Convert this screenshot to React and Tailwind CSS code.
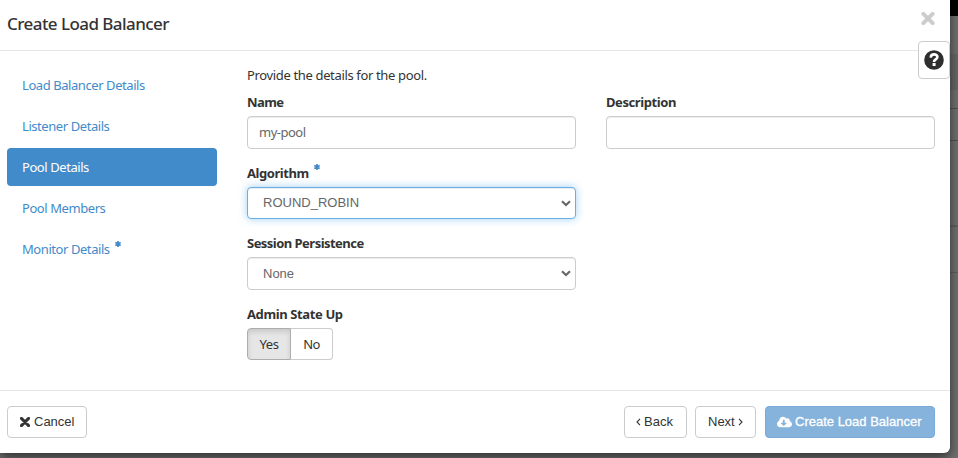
import { FaCloudDownloadAlt } from "react-icons/fa";

const sans = "font-['Noto_Sans',sans-serif]";
const arial = "font-['Liberation_Sans',Arial,sans-serif]";
const boxed = "rounded-[4px] border border-[#ccc] bg-white";

function Star({ className }) {
  return (
    <svg className={className} width="6" height="6" viewBox="0 0 6 6" stroke="#428bca" strokeWidth="1.7">
      <path d="M3 0v6M.3 1.4l5.4 3.2M5.7 1.4L.3 4.6" />
    </svg>
  );
}

function Cross({ className }) {
  return (
    <svg className={className} viewBox="0 0 14 14" fill="none" stroke="currentColor" strokeWidth="4.2">
      <path d="M2 2l10 10M12 2L2 12" strokeLinecap="round" />
    </svg>
  );
}

function Help() {
  return (
    <svg width="20" height="20" viewBox="0 0 20 20">
      <circle cx="10" cy="10" r="9.8" fill="#2e2e2e" />
      <path d="M6.7 7.6C6.9 5.3 8.2 4.4 10 4.4c2 0 3.4 1 3.4 2.7 0 2.3-3.3 2.2-3.3 4.5v.4" fill="none" stroke="#fff" strokeWidth="2.6" />
      <path d="M8.6 13h3v3h-3z" fill="#fff" />
    </svg>
  );
}

function Chevron() {
  return (
    <svg width="10" height="7" viewBox="0 0 10 7" fill="none" stroke="#666" strokeWidth="2.1">
      <path d="M1 1.2l4 3.8 4-3.8" />
    </svg>
  );
}

function Angle({ d }) {
  return (
    <svg width="5" height="8" viewBox="0 0 5 8" fill="none" stroke="#333" strokeWidth="1.1">
      <path d={d} />
    </svg>
  );
}

function NavItem({ children, active, required }) {
  return (
    <li className={`flex h-[38px] items-center rounded-[4px] pl-[15px] ${active ? "bg-[#428bca] text-white" : "text-[#428bca]"}`}>
      <span className="tracking-[-0.43px]">{children}</span>
      {required && <Star className="mb-[11px] ml-[5px]" />}
    </li>
  );
}

function Label({ children, required, tracking }) {
  return (
    <div className="flex h-[18px] items-center font-bold">
      <span className={tracking}>{children}</span>
      {required && <Star className="mb-[12px] ml-[5px]" />}
    </div>
  );
}

function Select({ children, focused }) {
  return (
    <div
      className={`flex items-center justify-between rounded-[4px] border bg-white pr-1 pl-[15px] text-[13px] text-[#666] ${arial} ${
        focused
          ? "h-8 border-[#66afe9] shadow-[inset_0_1px_1px_rgba(0,0,0,0.075),0_0_8px_rgba(102,175,233,0.6)]"
          : "h-[33px] border-[#ccc] shadow-[inset_0_1px_1px_rgba(0,0,0,0.075)]"
      }`}
    >
      <span>{children}</span>
      <Chevron />
    </div>
  );
}

export default function App() {
  return (
    <div className={`relative h-[458px] w-[958px] overflow-hidden bg-[#707070] ${sans} text-[13px] leading-[18px] whitespace-nowrap text-[#333]`}>
      <div className="absolute top-0 right-0 w-3">
        <div className="h-4 bg-black" />
        <div className="h-[38px] bg-[#707070]" />
        <div className="h-9 bg-[#686868]" />
        <div className="h-[19px] border-b border-[#505050]" />
        <div className="h-8 border-b border-[#505050]" />
        <div className="h-[86px] border-b-2 border-[#606060]" />
        <div className="h-[46px] border-b border-[#606060]" />
      </div>

      <div className="relative flex h-[453px] w-[950px] flex-col rounded-br-[6px] bg-white shadow-[0_4px_12px_rgba(0,0,0,0.6)]">
        <header className="flex h-[51px] shrink-0 justify-between border-b border-[#e5e5e5] pr-[15px] pl-[7px]">
          <h4 className="mt-[13px] text-[17px] leading-[22px] font-medium tracking-[-0.56px]">Create Load Balancer</h4>
          <Cross className="mt-[12px] h-[13px] w-[14px] text-[#ccc]" />
        </header>
        <button className={`absolute top-[41px] right-0 flex h-[38px] w-8 items-center justify-center ${boxed}`}>
          <Help />
        </button>

        <div className="flex h-[339px] shrink-0 pr-[15px] pl-[7px]">
          <ul className="mt-[15px] flex w-[210px] flex-col gap-[3px]">
            <NavItem>Load Balancer Details</NavItem>
            <NavItem>Listener Details</NavItem>
            <NavItem active>Pool Details</NavItem>
            <NavItem>Pool Members</NavItem>
            <NavItem required>Monitor Details</NavItem>
          </ul>
          <main className="ml-[30px] flex-1 pt-[15px]">
            <p className="tracking-[-0.35px]">Provide the details for the pool.</p>
            <div className="mt-[9px] grid grid-cols-2 gap-x-[30px]">
              <div>
                <Label tracking="tracking-[-0.6px]">Name</Label>
                <div className={`mt-[5px] flex h-[33px] items-center pb-px pl-[11px] text-[#666] shadow-[inset_0_1px_1px_rgba(0,0,0,0.075)] ${boxed}`}>
                  <span className="tracking-[-0.5px]">my-pool</span>
                </div>
              </div>
              <div>
                <Label tracking="tracking-[-0.42px]">Description</Label>
                <div className={`mt-[5px] h-[33px] shadow-[inset_0_1px_1px_rgba(0,0,0,0.075)] ${boxed}`} />
              </div>
              <div className="col-start-1 mt-[15px]">
                <Label required tracking="tracking-[-0.43px]">Algorithm</Label>
                <div className="mt-[5px]">
                  <Select focused>ROUND_ROBIN</Select>
                </div>
              </div>
              <div className="col-start-1 mt-[15px]">
                <Label tracking="tracking-[-0.53px]">Session Persistence</Label>
                <div className="mt-[5px]">
                  <Select>None</Select>
                </div>
              </div>
              <div className="col-start-1 mt-[15px]">
                <Label tracking="tracking-[-0.38px]">Admin State Up</Label>
                <div className="mt-[5px] flex h-8 tracking-[-0.5px]">
                  <button className="w-11 rounded-l-[4px] border border-[#adadad] bg-[#e6e6e6] shadow-[inset_0_3px_5px_rgba(0,0,0,0.125)]">Yes</button>
                  <button className="w-[42px] rounded-r-[4px] border border-l-0 border-[#ccc]">No</button>
                </div>
              </div>
            </div>
          </main>
        </div>

        <footer className={`flex h-[63px] items-start border-t border-[#e5e5e5] pt-[15px] pr-[15px] pl-[7px] ${arial}`}>
          <button className={`flex h-8 w-20 items-center pl-3 ${boxed}`}>
            <Cross className="mr-[4px] h-[10px] w-[10px]" />
            <span>Cancel</span>
          </button>
          <div className="ml-auto flex">
            <button className={`flex h-8 w-[63px] items-center gap-[3px] pl-[11px] ${boxed}`}>
              <Angle d="M4 .8L1 4l3 3.2" />
              <span>Back</span>
            </button>
            <button className={`ml-2 flex h-8 w-[61px] items-center gap-[3px] pl-3 ${boxed}`}>
              <span>Next</span>
              <Angle d="M1 .8L4 4 1 7.2" />
            </button>
            <button className="ml-[9px] flex h-8 w-[170px] items-center rounded-[4px] border border-[#7aaad6] bg-[#86b3dc] pl-[11px] text-white">
              <FaCloudDownloadAlt className="mr-[3px] h-[14px] w-[15px]" />
              <span className="[-webkit-text-stroke:0.3px_white]">Create Load Balancer</span>
            </button>
          </div>
        </footer>
      </div>
    </div>
  );
}
